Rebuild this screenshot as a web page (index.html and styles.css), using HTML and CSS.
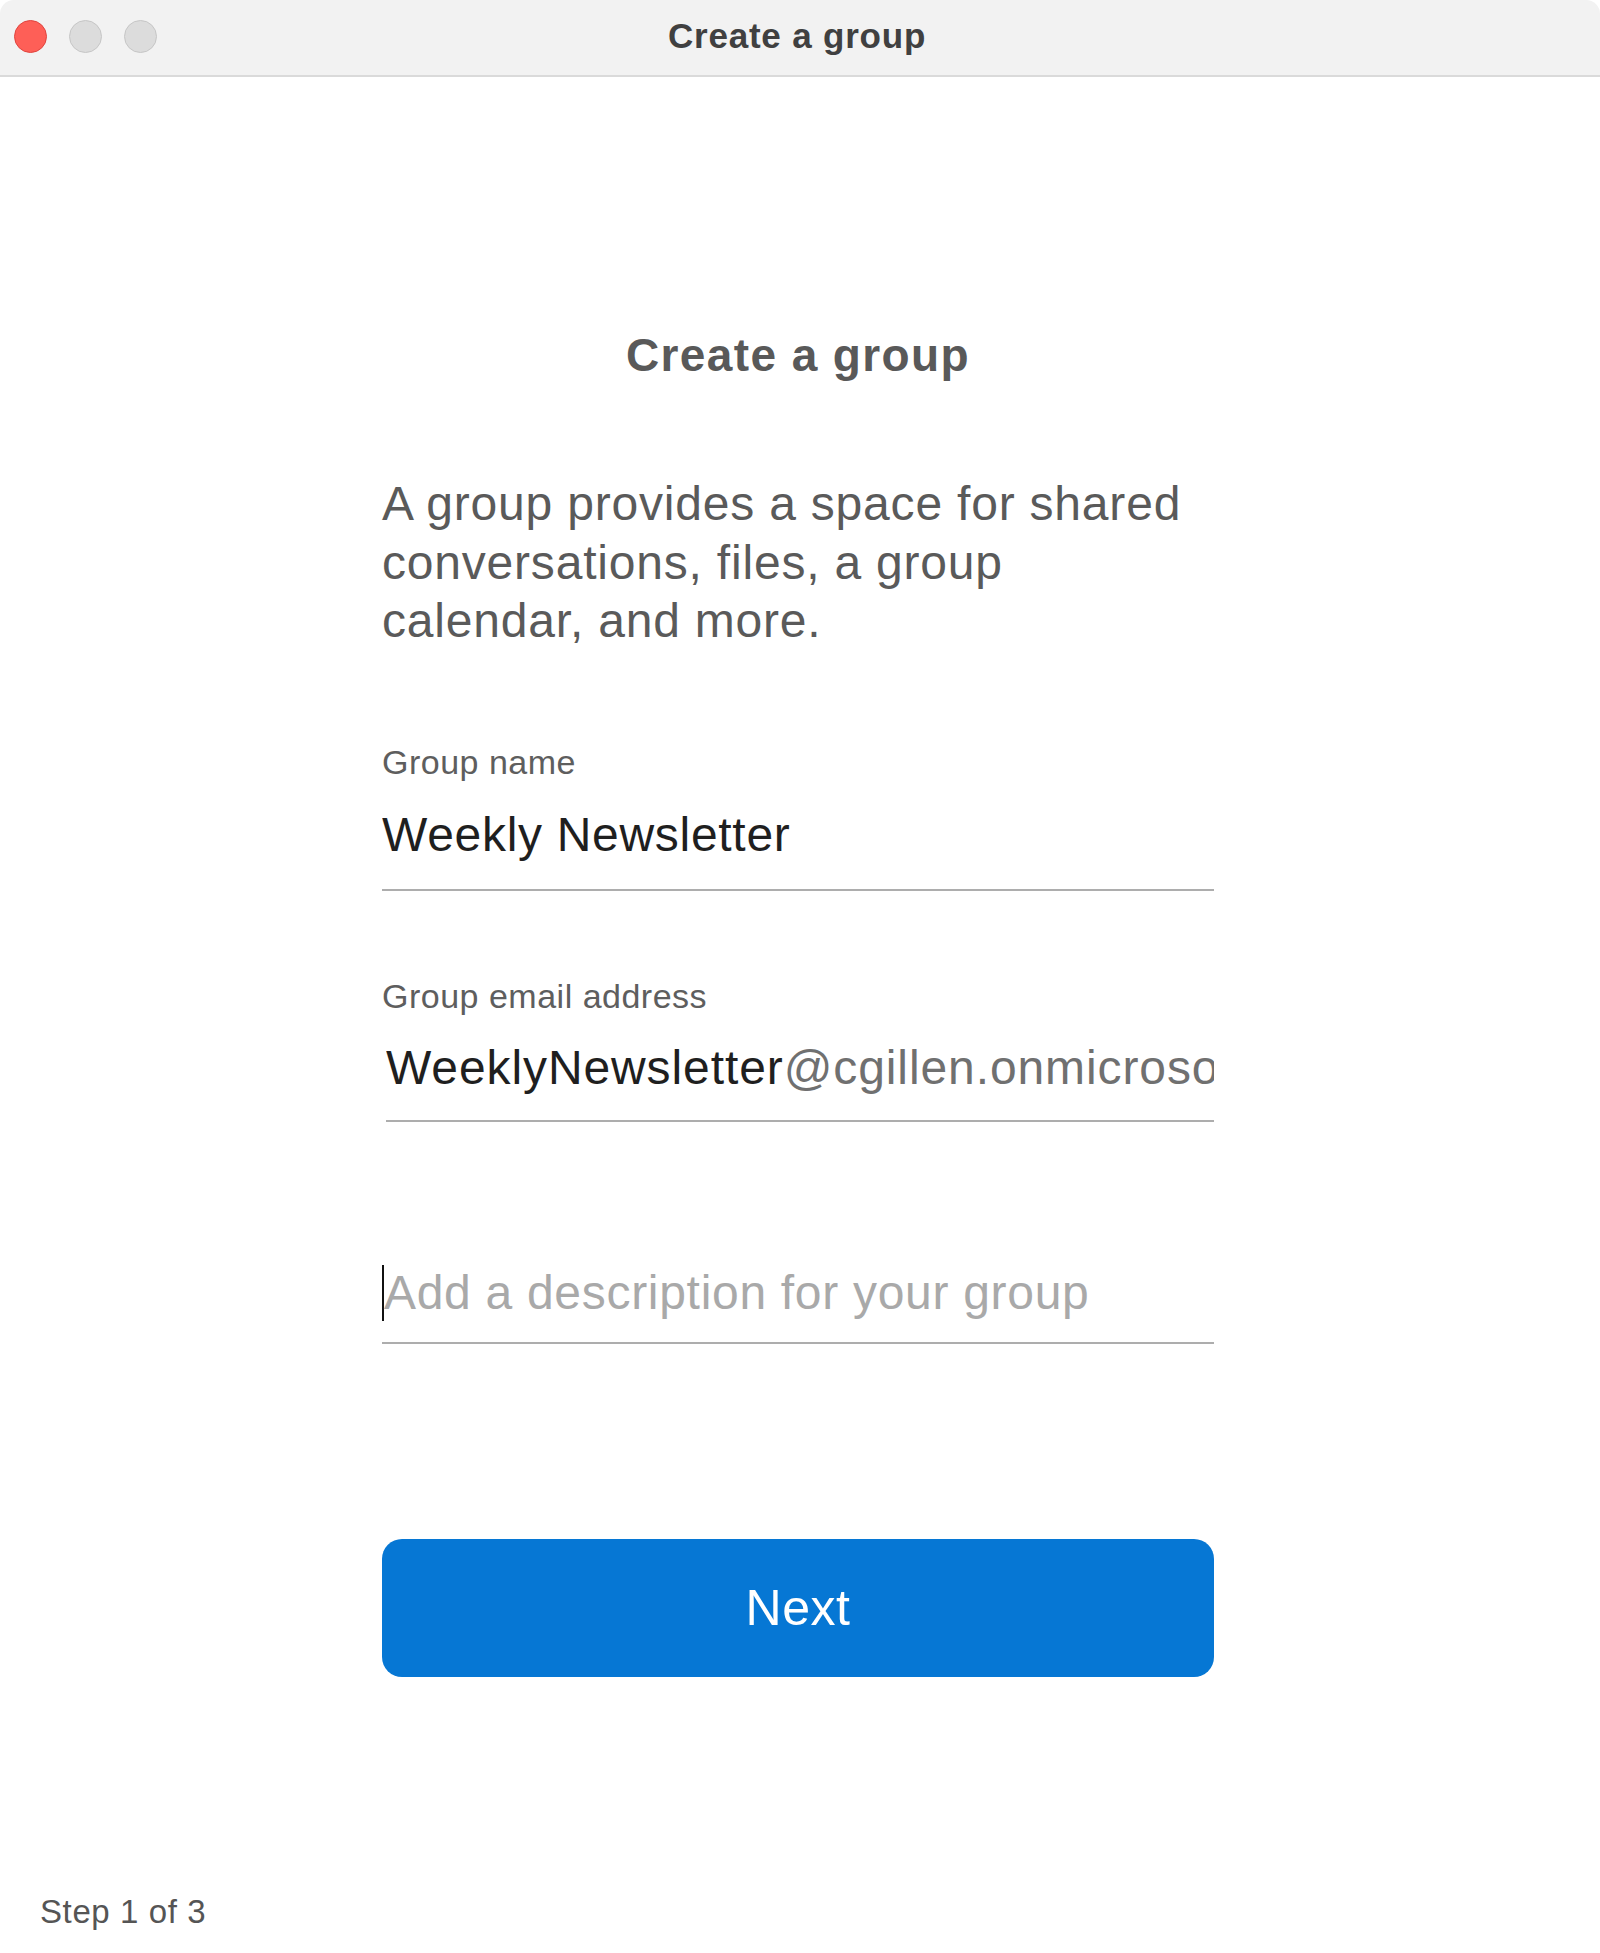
FILE: index.html
```html
<!DOCTYPE html>
<html lang="en">
<head>
    <meta charset="UTF-8">
    <meta name="viewport" content="width=device-width, initial-scale=1.0">
    <title>Create a group</title>
    <link rel="stylesheet" href="styles.css">
</head>
<body>
    <div class="window">
        <header class="titlebar">
            <div class="traffic-lights">
                <span class="light light-close"></span>
                <span class="light"></span>
                <span class="light"></span>
            </div>
            <div class="titlebar-title">Create a group</div>
        </header>

        <main class="group-form">
            <h1 class="form-heading">Create a group</h1>
            <p class="form-intro">
                A group provides a space for shared conversations, files, a group calendar, and more.
            </p>

            <div class="field field-name">
                <label class="field-label">Group name</label>
                <div class="field-input">Weekly Newsletter</div>
            </div>

            <div class="field field-email">
                <label class="field-label">Group email address</label>
                <div class="field-input email-input">
                    <span class="email-alias">WeeklyNewsletter</span><span class="email-domain">@cgillen.onmicrosoft.com</span>
                </div>
            </div>

            <div class="field field-description">
                <div class="field-input description-input">
                    <span class="caret"></span><span class="placeholder">Add a description for your group</span>
                </div>
            </div>

            <button class="next-button">Next</button>
        </main>

        <footer class="step-footer">Step 1 of 3</footer>
    </div>
</body>
</html>
```

FILE: styles.css
```css
* {
    margin: 0;
    padding: 0;
    box-sizing: border-box;
}

body {
    font-family: "Liberation Sans", Arial, sans-serif;
    background: #ffffff;
    color: #222;
}

.window {
    min-height: 100vh;
    display: flex;
    flex-direction: column;
}

/* title bar */
.titlebar {
    height: 77px;
    background: #f2f2f2;
    border-bottom: 2px solid #dadada;
    border-radius: 14px 14px 0 0;
    display: flex;
    align-items: center;
    justify-content: center;
    position: relative;
}

.traffic-lights {
    position: absolute;
    left: 14px;
    top: 20px;
    display: flex;
    gap: 22px;
}

.light {
    width: 33px;
    height: 33px;
    border-radius: 50%;
    background: #dcdcdc;
    border: 1px solid #c6c6c6;
}

.light-close {
    background: #fe5f57;
    border-color: #e0443e;
}

.titlebar-title {
    font-size: 35px;
    font-weight: 700;
    letter-spacing: 0.8px;
    color: #404040;
    margin-top: -4px;
    margin-left: -6px;
}

/* form */
.group-form {
    width: 832px;
    margin-left: calc(50% - 418px);
    display: flex;
    flex-direction: column;
}

.form-heading {
    margin-top: 250px;
    text-align: center;
    font-size: 46px;
    line-height: 56px;
    font-weight: 700;
    letter-spacing: 1.4px;
    color: #595959;
}

.form-intro {
    margin-top: 92px;
    max-width: 820px;
    font-size: 48px;
    line-height: 58.5px;
    letter-spacing: 0.8px;
    color: #5a5a5a;
}

.field-label {
    display: block;
    font-size: 34px;
    line-height: 40px;
    letter-spacing: 0.5px;
    color: #5e5e5e;
}

.field-input {
    font-size: 48px;
    line-height: 58px;
    letter-spacing: 0.7px;
    color: #1f1f1f;
    border-bottom: 2px solid #adadad;
    white-space: nowrap;
    overflow: hidden;
}

.field-name {
    margin-top: 91px;
}

.field-name .field-input {
    margin-top: 24px;
    padding-bottom: 25px;
}

.field-email {
    margin-top: 85px;
}

.email-input {
    margin-top: 23px;
    margin-left: 4px;
    padding-bottom: 23px;
    letter-spacing: 0.9px;
}

.email-domain {
    color: #707070;
}

.field-description {
    margin-top: 142px;
}

.description-input {
    padding-bottom: 20px;
    display: flex;
    align-items: center;
}

.caret {
    width: 2px;
    height: 56px;
    background: #111;
}

.placeholder {
    color: #a9a9a9;
}

.next-button {
    margin-top: 195px;
    height: 138px;
    border: none;
    border-radius: 20px;
    background: #0677d4;
    color: #ffffff;
    font-family: inherit;
    font-size: 50px;
    letter-spacing: 0.5px;
    cursor: pointer;
}

/* footer */
.step-footer {
    margin-top: auto;
    padding: 0 0 21px 40px;
    font-size: 33px;
    line-height: 40px;
    letter-spacing: 0.6px;
    color: #555;
}
```
